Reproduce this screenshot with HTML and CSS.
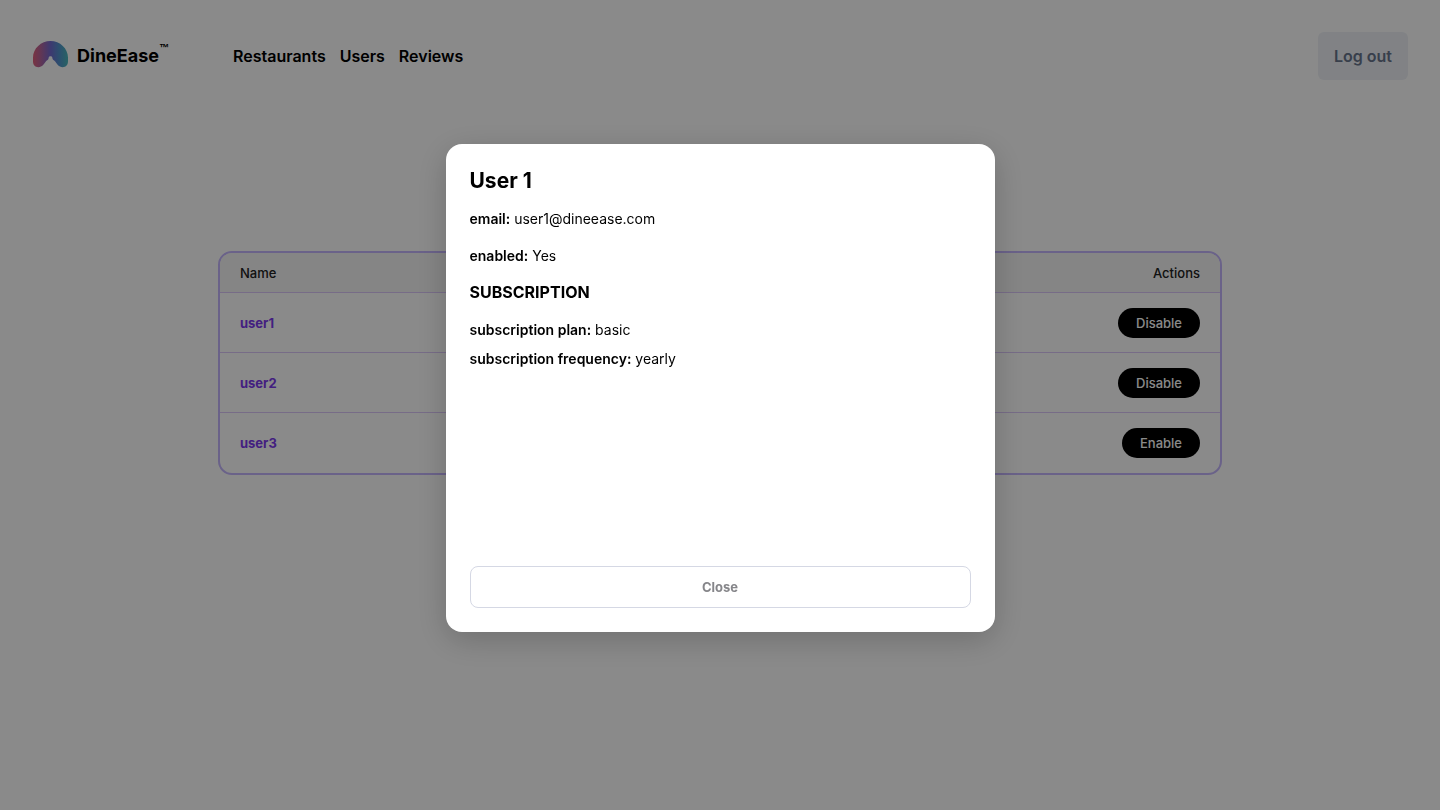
FILE: index.html
```html
<!DOCTYPE html>
<html lang="en">
<head>
<meta charset="utf-8">
<meta name="viewport" content="width=device-width, initial-scale=1">
<title>DineEase – Users</title>
<link rel="stylesheet" href="styles.css">
</head>
<body>
<header class="header">
  <a class="brand" href="#">
    <svg class="brand-mark" viewBox="0 0 36 28" aria-hidden="true">
      <defs>
        <linearGradient id="mark" x1="0" x2="1" y1="0" y2="0">
          <stop offset="0" stop-color="#e0607a"/>
          <stop offset=".22" stop-color="#b4659c"/>
          <stop offset=".5" stop-color="#7169cf"/>
          <stop offset=".75" stop-color="#5293cc"/>
          <stop offset="1" stop-color="#4bb8ba"/>
        </linearGradient>
      </defs>
      <path fill="url(#mark)" d="M18.500 1C9 1 1 8.500 1 17.500V21C1 25 3 27.200 6.300 27.200C10.300 27.200 12 24 14 21.300C15 20 16.400 19.800 16.600 18.200L16.700 17.400C17 15.900 20 15.900 20.300 17.400L20.400 18.200C20.600 19.800 22 20 23 21.300C25 24 26.700 27.200 30.700 27.200C34 27.200 36 25 36 21V17.500C36 8.500 28 1 18.500 1Z"/>
    </svg>
    <span class="brand-name">DineEase</span><span class="brand-tm">™</span>
  </a>
  <nav class="nav">
    <a href="#">Restaurants</a>
    <a href="#">Users</a>
    <a href="#">Reviews</a>
  </nav>
  <button class="logout" type="button">Log out</button>
</header>
<main class="main">
  <div class="table-card">
    <table class="users">
      <thead>
        <tr><th scope="col">Name</th><th scope="col">Actions</th></tr>
      </thead>
      <tbody>
        <tr><td><a href="#">user1</a></td><td><button class="pill" type="button">Disable</button></td></tr>
        <tr><td><a href="#">user2</a></td><td><button class="pill" type="button">Disable</button></td></tr>
        <tr><td><a href="#">user3</a></td><td><button class="pill" type="button">Enable</button></td></tr>
      </tbody>
    </table>
  </div>
</main>
<div class="overlay">
  <section class="modal" role="dialog" aria-modal="true" aria-labelledby="modal-title">
    <h2 class="modal-title" id="modal-title">User 1</h2>
    <p class="account"><strong>email:</strong> user1@dineease.com</p>
    <p class="account"><strong>enabled:</strong> Yes</p>
    <h3 class="modal-subtitle">SUBSCRIPTION</h3>
    <p class="plan"><strong>subscription plan:</strong> basic</p>
    <p class="plan"><strong>subscription frequency:</strong> yearly</p>
    <button class="close" type="button">Close</button>
  </section>
</div>
</body>
</html>
```
FILE: styles.css
```css
* {
  box-sizing: border-box;
}

body {
  margin: 0;
  min-height: 100vh;
  background: #fff;
  color: #000;
  font-family: Inter, "Liberation Sans", sans-serif;
  font-size: 14px;
}

a {
  color: inherit;
  text-decoration: none;
}

button {
  font: inherit;
  cursor: pointer;
}

.header {
  display: flex;
  align-items: center;
  padding: 32px;
}

.brand {
  display: flex;
  align-items: center;
}

.brand-mark {
  width: 36px;
  height: 28px;
  margin-bottom: 4px;
}

.brand-name {
  margin-left: 9px;
  font-size: 18px;
  line-height: 24px;
  font-weight: 700;
}

.brand-tm {
  align-self: flex-start;
  font-family: "Liberation Sans", sans-serif;
  font-size: 10px;
  line-height: 16px;
  font-weight: 700;
}

.nav {
  display: flex;
  flex: 1;
  gap: 14px;
  margin-left: 64px;
  font-size: 16px;
  font-weight: 600;
}

.logout {
  height: 48px;
  padding: 0 16px;
  border: 0;
  border-radius: 6px;
  background: #eef1f6;
  color: #68758c;
  font-size: 16px;
  font-weight: 600;
}

.main {
  padding: 139px 24px 32px;
}

.table-card {
  max-width: 1004px;
  margin: 0 auto;
  border: 2px solid #c4b5fd;
  border-radius: 14px;
  overflow: hidden;
}

.users {
  width: 100%;
  border-collapse: separate;
  border-spacing: 0;
}

.users th,
.users td {
  padding: 0 20px;
  text-align: left;
}

.users th {
  height: 40px;
  background: #f5f5f5;
  border-bottom: 1px solid #dcc8fa;
  color: #222;
  font-size: 13px;
  font-weight: 500;
}

.users td {
  height: 60px;
  border-bottom: 1px solid #dcc8fa;
  font-size: 13px;
}

.users tr:last-child td {
  border-bottom-color: transparent;
}

.users th:last-child,
.users td:last-child {
  text-align: right;
}

.users td a {
  color: #7c3aed;
  font-weight: 700;
}

.pill {
  height: 30px;
  padding: 0 18px;
  border: 0;
  border-radius: 15px;
  background: #000;
  color: #fff;
  font-size: 13px;
  font-weight: 500;
}

.overlay {
  position: fixed;
  inset: 0;
  display: flex;
  align-items: flex-start;
  justify-content: center;
  padding: 144px 24px 24px;
  background: rgba(0, 0, 0, 0.46);
}

.modal {
  display: flex;
  flex-direction: column;
  width: 100%;
  max-width: 549px;
  min-height: 488px;
  padding: 24px;
  border-radius: 16px;
  background: #fff;
  box-shadow: 0 8px 32px rgba(0, 0, 0, 0.2);
}

.modal-title {
  margin: 0 0 14px;
  font-size: 21px;
  line-height: 26px;
  font-weight: 700;
}

.account,
.plan {
  margin: 0;
  line-height: 21px;
}

.account strong,
.plan strong {
  font-weight: 600;
}

.account {
  margin-bottom: 16px;
}

.modal-subtitle {
  margin: 0 0 16px;
  font-size: 16px;
  line-height: 21px;
  font-weight: 700;
}

.plan {
  margin-bottom: 8px;
}

.close {
  height: 42px;
  margin-top: auto;
  border: 1px solid #d5d8e4;
  border-radius: 8px;
  background: #fff;
  color: #86868a;
  font-size: 13px;
  font-weight: 700;
}
```
